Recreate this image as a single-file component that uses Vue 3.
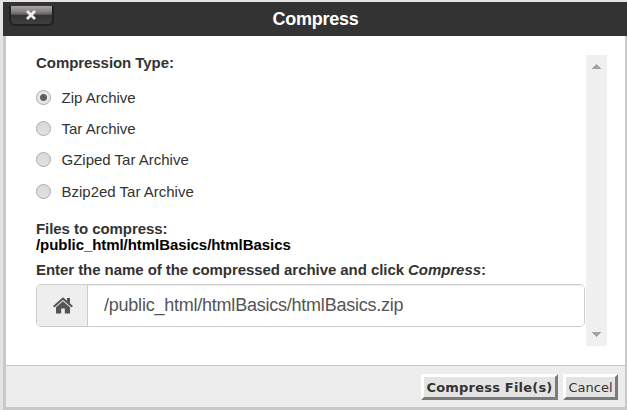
<script setup>
import { ref } from 'vue'

const types = ['Zip Archive', 'Tar Archive', 'GZiped Tar Archive', 'Bzip2ed Tar Archive']
const selected = ref('Zip Archive')
const path = ref('/public_html/htmlBasics/htmlBasics.zip')
</script>

<template>
  <div class="page">
    <section class="dialog">
      <header class="header">
        <button class="close" aria-label="Close">
          <svg width="12" height="12" viewBox="0 0 12 12">
            <path d="M2 2 L10 10 M10 2 L2 10" stroke="#eee" stroke-width="2.8" />
          </svg>
        </button>
        <h1 class="title">Compress</h1>
      </header>
      <div class="body">
        <form class="form">
          <div class="label">Compression Type:</div>
          <div class="options">
            <label v-for="t in types" :key="t" class="option">
              <input v-model="selected" class="radio" type="radio" name="type" :value="t" />
              <span>{{ t }}</span>
            </label>
          </div>
          <div class="label files">Files to compress:</div>
          <div class="label file">/public_html/htmlBasics/htmlBasics</div>
          <div class="label prompt">Enter the name of the compressed archive and click <em>Compress</em>:</div>
          <div class="group">
            <span class="addon">
              <svg width="20" height="17" viewBox="0 0 20 17" fill="#555">
                <path d="M10 0.2 L14 3.7 V1 H17 V6.4 L20 9 L18.6 10.6 L10 3.1 L1.4 10.6 L0 9 Z" />
                <path d="M10 4.2 L17 10.3 V16.5 H11.8 V11.5 H8.2 V16.5 H3 V10.3 Z" />
              </svg>
            </span>
            <input v-model="path" class="input" type="text" />
          </div>
        </form>
        <div class="scrollbar">
          <svg width="9" height="5" viewBox="0 0 9 5" shape-rendering="crispEdges"><path d="M4 0 H5 V1 H6 V2 H7 V3 H8 V4 H9 V5 H0 V4 H1 V3 H2 V2 H3 V1 H4 Z" fill="#a3a3a3" /></svg>
          <svg width="9" height="5" viewBox="0 0 9 5" shape-rendering="crispEdges"><path d="M0 0 H9 V1 H8 V2 H7 V3 H6 V4 H5 V5 H4 V4 H3 V3 H2 V2 H1 V1 H0 Z" fill="#a3a3a3" /></svg>
        </div>
      </div>
      <footer class="footer">
        <button class="btn primary">Compress File(s)</button>
        <button class="btn cancel">Cancel</button>
      </footer>
    </section>
  </div>
</template>

<style>
body {
  margin: 0;
  overflow: hidden;
}
</style>

<style scoped>
.page {
  box-sizing: border-box;
  width: 627px;
  height: 410px;
  padding: 2px 0 0 3px;
  background: #e4e4e4;
  font-family: "Liberation Sans", Arial, sans-serif;
  color: #333;
}
.dialog {
  display: flex;
  flex-direction: column;
  height: 408px;
}
.header {
  position: relative;
  display: flex;
  justify-content: center;
  height: 34px;
  flex: none;
  background: #333;
}
.close {
  position: absolute;
  left: 6px;
  top: 4px;
  box-sizing: border-box;
  width: 45px;
  height: 20px;
  padding: 0 2px 1px 0;
  display: flex;
  align-items: center;
  justify-content: center;
  border: 2px solid #1d2224;
  border-top: 0;
  border-radius: 0 0 6px 6px;
  background: linear-gradient(#a8a4a8 0, #817d80 6px, #555154 9px, #353234 9px, #413d40 18px);
}
.title {
  margin: 0;
  padding-left: 1px;
  font-size: 18px;
  line-height: 34px;
  font-weight: bold;
  letter-spacing: -0.25px;
  color: #fff;
}
.body {
  box-sizing: border-box;
  display: flex;
  height: 329px;
  flex: none;
  padding: 19px 18px 19px 30px;
  border: solid #c9c9c9;
  border-width: 0 2px 0 3px;
  background: #fff;
}
.form {
  width: 549px;
  margin-right: 1px;
}
.label {
  font-size: 15px;
  line-height: 16px;
  font-weight: bold;
  letter-spacing: -0.06px;
  white-space: nowrap;
}
.options {
  display: grid;
  grid-template-rows: 31px 31px 31px 32px;
  margin-top: 11px;
}
.option {
  display: flex;
  align-items: center;
  gap: 10.5px;
  font-size: 15px;
}
.radio {
  appearance: none;
  box-sizing: border-box;
  width: 15px;
  height: 15px;
  margin: 0;
  border: 1px solid #ababab;
  border-radius: 50%;
  background: linear-gradient(#d9d9d9, #e2e2e2);
}
.radio:checked {
  background: radial-gradient(circle, #606060 0 3px, #e6e6e6 4px);
}
.files {
  margin-top: 14px;
}
.file {
  color: #000;
}
.prompt {
  margin-top: 9px;
}
.group {
  box-sizing: border-box;
  display: flex;
  height: 43px;
  margin-top: 6px;
  border: 1px solid #ccc;
  border-radius: 5px;
  overflow: hidden;
}
.addon {
  box-sizing: border-box;
  width: 51px;
  flex: none;
  display: flex;
  align-items: center;
  justify-content: center;
  padding-left: 1px;
  border-right: 1px solid #ccc;
  background: #eee;
}
.input {
  flex: 1;
  min-width: 0;
  border: 0;
  outline: 0;
  padding: 0 16px;
  background: #fff;
  box-shadow: inset 0 1px 1px rgba(0, 0, 0, 0.075);
  font: 18px "Liberation Sans", Arial, sans-serif;
  letter-spacing: -0.23px;
  color: #555;
}
.scrollbar {
  box-sizing: border-box;
  width: 21px;
  height: 291px;
  padding: 9px 0;
  display: flex;
  flex-direction: column;
  align-items: center;
  justify-content: space-between;
  background: #f0f0f0;
}
.footer {
  box-sizing: border-box;
  display: flex;
  justify-content: flex-end;
  gap: 5px;
  height: 45px;
  flex: none;
  padding: 8px 7px 0 0;
  border: solid #c9c9c9;
  border-width: 1px 2px 3px 3px;
  background: #ededed;
}
.btn {
  box-sizing: border-box;
  height: 26px;
  padding: 0;
  border: 3px solid;
  border-color: #fff #7b7b7b #7b7b7b #fff;
  background: #e4e4e4;
  font: 13px "DejaVu Sans", Verdana, sans-serif;
  color: #333;
  white-space: nowrap;
}
.primary {
  width: 137px;
  font-weight: bold;
  letter-spacing: 0.2px;
}
.cancel {
  width: 55px;
}
</style>
